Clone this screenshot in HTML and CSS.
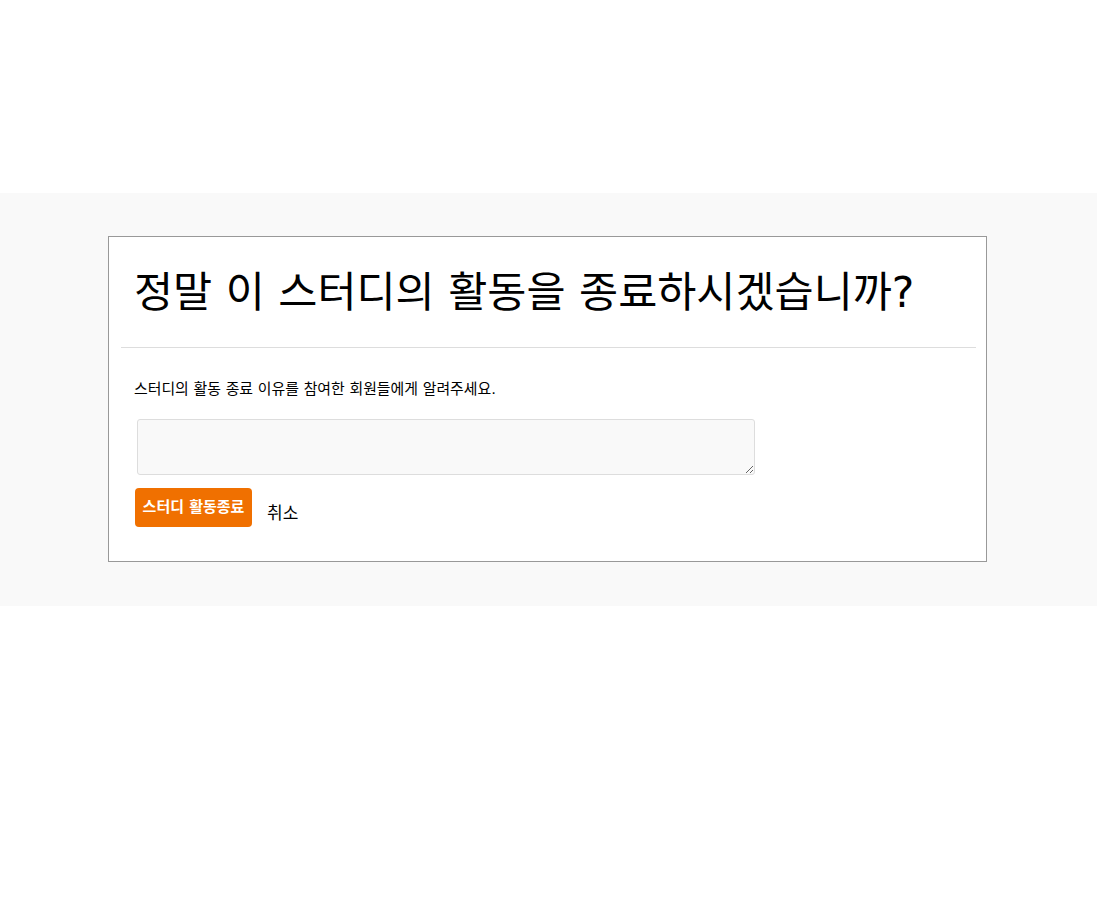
FILE: index.html
```html
<!DOCTYPE html>
<html lang="ko">
<head>
<meta charset="utf-8">
<link rel="stylesheet" href="styles.css">
</head>
<body>
<div class="band">
  <div class="dialog">
    <div class="dialog-head">
      <h1 class="title">정말 이 스터디의 활동을 종료하시겠습니까?</h1>
    </div>
    <div class="dialog-body">
      <p class="msg">스터디의 활동 종료 이유를 참여한 회원들에게 알려주세요.</p>
      <textarea class="reason"></textarea>
      <div class="actions">
        <button class="btn-end">스터디 활동종료</button>
        <a class="cancel">취소</a>
      </div>
    </div>
  </div>
</div>
</body>
</html>
```
FILE: styles.css
```css
html, body {
  margin: 0;
  padding: 0;
  background: #fff;
  font-family: "DejaVu Sans", "Noto Sans CJK KR", sans-serif;
  color: #000;
}
.band {
  margin-top: 193px;
  background: #f9f9f9;
  padding: 43px 0 44px 108px;
}
.dialog {
  border: 1px solid #999;
  background: #fff;
  padding: 0 10px 0 12px;
  box-sizing: border-box;
  width: 879px;
}
.dialog-head {
  border-bottom: 1px solid #ddd;
  padding: 0 13px;
  height: 110px;
  display: flex;
  align-items: center;
}
.title {
  margin: 0;
  font-size: 42.5px;
  font-weight: 400;
  line-height: 1.2;
}
.dialog-body {
  padding: 30px 13px 34px;
}
.msg {
  margin: 0;
  font-size: 14.9px;
  line-height: 22px;
}
.reason {
  display: block;
  margin: 19px 0 0 3px;
  width: 618px;
  height: 56px;
  box-sizing: border-box;
  border: 1px solid #ddd;
  border-radius: 3px;
  background: #f9f9f9;
  resize: vertical;
}
.actions {
  display: flex;
  align-items: flex-end;
  margin-top: 13px;
  margin-left: 1px;
  gap: 15px;
}
.btn-end {
  width: 117px;
  height: 39px;
  border: none;
  border-radius: 4px;
  background: #f07000;
  color: #fff;
  font-family: inherit;
  font-size: 15px;
  font-weight: 700;
  padding: 0 0 4px;
}
.cancel {
  font-size: 17px;
  line-height: 22px;
  padding-bottom: 3px;
}
```
